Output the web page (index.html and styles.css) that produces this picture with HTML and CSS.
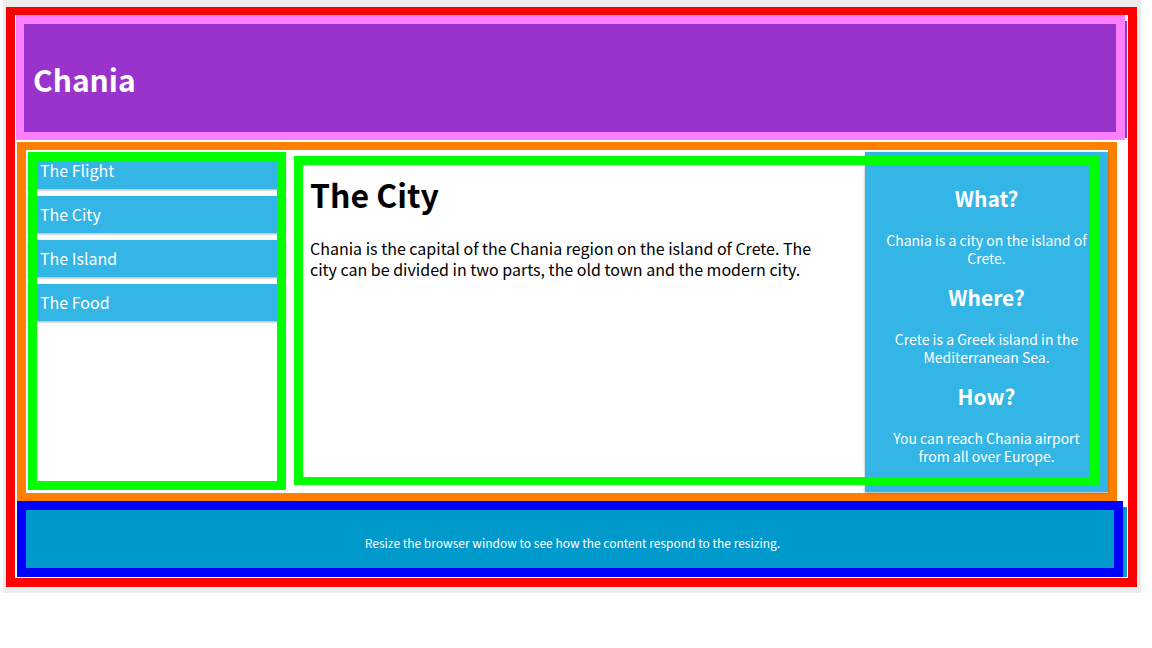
FILE: index.html
```html
<!DOCTYPE html>
<html lang="en">
<head>
<meta charset="utf-8">
<title>Chania</title>
<link rel="stylesheet" href="styles.css">
</head>
<body>
<div class="shell">
  <div class="frame">
    <div class="header"><h1>Chania</h1></div>
    <div class="main">
      <div class="menu">
        <ul>
          <li>The Flight</li>
          <li>The City</li>
          <li>The Island</li>
          <li>The Food</li>
        </ul>
      </div>
      <div class="body-grid">
        <div class="content">
          <h1>The City</h1>
          <p>Chania is the capital of the Chania region on the island of Crete. The<br>city can be divided in two parts, the old town and the modern city.</p>
        </div>
        <div class="aside">
          <h2>What?</h2>
          <p>Chania is a city on the island of<br>Crete.</p>
          <h2>Where?</h2>
          <p>Crete is a Greek island in the<br>Mediterranean Sea.</p>
          <h2>How?</h2>
          <p>You can reach Chania airport<br>from all over Europe.</p>
        </div>
        <div class="frame-line"></div>
      </div>
    </div>
    <div class="footer"><p>Resize the browser window to see how the content respond to the resizing.</p></div>
  </div>
</div>
</body>
</html>
```
FILE: styles.css
```css
* { box-sizing: border-box; }
html, body { margin: 0; padding: 0; background: #fff; }
body { font-family: "Noto Sans CJK KR", "Noto Sans", sans-serif; }

.shell {
  margin-left: 3px;
  width: 1138px;
  height: 593px;
  background: #ececec;
  padding: 7px 4px 0 3px;
}
.frame {
  width: 1131px;
  height: 580px;
  border: 9px solid #ff0000;
  border-top-width: 8px;
  background: #fff;
  display: flex;
  flex-direction: column;
  align-items: flex-start;
}

.header {
  margin-left: 1px;
  width: 1109px;
  height: 125px;
  background: #9933cc;
  border-style: solid;
  border-color: #ff80ff;
  border-width: 9px 9px 8px 8px;
  box-shadow: 6px 2px 0 -4px #9933cc;
  display: flex;
  align-items: center;
  padding-left: 9px;
  padding-top: 2px;
}
.header h1 {
  margin: 0;
  font-size: 30px;
  line-height: 40px;
  font-weight: 700;
  color: #fff;
}

.main {
  margin-top: 2px;
  margin-left: 2px;
  width: 1100px;
  height: 359px;
  border: 9px solid #ff8000;
  border-top-width: 8px;
  border-bottom-width: 8px;
  padding-top: 2px;
  display: flex;
  align-items: flex-start;
}

.menu {
  margin-left: 2px;
  width: 258px;
  height: 338px;
  outline: 9px solid #00ff00;
  outline-offset: -9px;
}
.menu ul { list-style: none; margin: 0; padding: 0; }
.menu li {
  height: 37px;
  padding: 8px 0 8px 12px;
  line-height: 21px;
  font-size: 16px;
  color: #fff;
  background: #33b5e5;
  margin-bottom: 7px;
  box-shadow: 0 1px 3px rgba(0,0,0,0.12), 0 1px 2px rgba(0,0,0,0.24);
}

.body-grid {
  margin-left: 8px;
  width: 814px;
  height: 340px;
  display: grid;
  grid-template-columns: 571px 243px;
  grid-template-rows: 340px;
}
.content {
  grid-area: 1 / 1;
  padding: 21px 16px 0 16px;
  background: #fff;
  color: #000;
}
.content h1 {
  margin: 0;
  font-size: 32px;
  line-height: 42px;
  font-weight: 700;
}
.content p {
  margin: 23px 0 0;
  font-size: 16px;
  line-height: 21px;
}

.aside {
  grid-area: 1 / 2;
  background: #33b5e5;
  color: #fff;
  text-align: center;
  padding: 34px 15px 0;
  box-shadow: 0 1px 3px rgba(0,0,0,0.12), 0 1px 2px rgba(0,0,0,0.24);
}
.aside h2 {
  margin: 0;
  font-size: 21px;
  line-height: 25px;
  font-weight: 700;
}
.aside p {
  margin: 20px 0 18px;
  font-size: 14px;
  line-height: 18px;
  white-space: nowrap;
}

.frame-line {
  grid-area: 1 / 1 / 2 / 3;
  margin: 4px 9px 7px 0;
  border: 9px solid #00ff00;
  border-bottom-width: 8px;
  z-index: 1;
}

.footer {
  margin-left: 2px;
  width: 1106px;
  height: 76px;
  border: 9px solid #0000ff;
  background: #0099cc;
  box-shadow: 7px 3px 0 -3px #0099cc;
  color: #fff;
  text-align: center;
  padding: 24px 0 0 5px;
}
.footer p {
  margin: 0;
  font-size: 12px;
  line-height: 18px;
}
```
